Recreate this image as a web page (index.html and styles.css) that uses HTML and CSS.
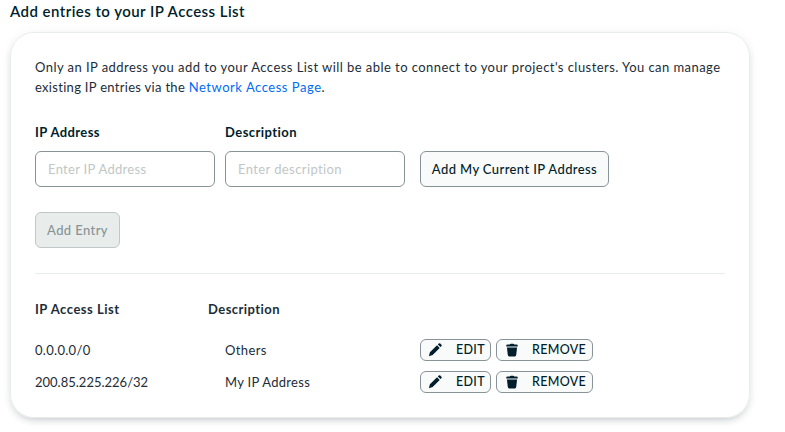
FILE: index.html
```
<!DOCTYPE html>
<html lang="en">
<head>
<meta charset="utf-8">
<title>IP Access List</title>
<link rel="stylesheet" href="styles.css">
</head>
<body>
<svg class="defs" aria-hidden="true">
  <symbol id="pencil" viewBox="0 0 16 16"><path d="M10.3 2.5 13.4 5.6 5.3 13.7 1 15 2.2 10.6ZM11.2 1.6 12.3.5Q13.2-.2 14 .6L15.4 2Q16 2.8 15.3 3.6L14.3 4.7Z"/></symbol>
  <symbol id="trash" viewBox="0 0 16 16"><path d="M5.5 1.8Q5.7.8 6.7.8H9.3Q10.3.8 10.5 1.8H13Q14.6 1.8 14.6 3V4H1.4V3Q1.4 1.8 3 1.8ZM2.2 5H13.8L12.8 13.8Q12.6 15.4 11.2 15.4H4.8Q3.4 15.4 3.2 13.8Z"/></symbol>
</svg>
<h1 class="title">Add entries to your IP Access List</h1>
<main class="card">
  <p class="intro"><span class="line first">Only an IP address you add to your Access List will be able to connect to your project's clusters. You can manage</span><br><span class="line second">existing IP entries via the <a class="link">Network Access Page</a>.</span></p>
  <form class="form">
    <label class="field"><span class="label">IP Address</span><input class="input ip" placeholder="Enter IP Address"></label>
    <label class="field"><span class="label desc">Description</span><input class="input" placeholder="Enter description"></label>
    <button type="button" class="button current">Add My Current IP Address</button>
  </form>
  <button type="button" class="button disabled" disabled>Add Entry</button>
  <hr class="rule">
  <div class="heads"><span class="list-label">IP Access List</span><span class="desc">Description</span></div>
  <div class="row">
    <span class="address zero">0.0.0.0/0</span><span class="note others">Others</span>
    <button class="small edit"><svg class="icon"><use href="#pencil"/></svg><span>EDIT</span></button>
    <button class="small remove"><svg class="icon"><use href="#trash"/></svg><span>REMOVE</span></button>
  </div>
  <div class="row">
    <span class="address">200.85.225.226/32</span><span class="note">My IP Address</span>
    <button class="small edit"><svg class="icon"><use href="#pencil"/></svg><span>EDIT</span></button>
    <button class="small remove"><svg class="icon"><use href="#trash"/></svg><span>REMOVE</span></button>
  </div>
</main>
</body>
</html>
```
FILE: styles.css
```
* { box-sizing: border-box; }
body { margin: 0; min-height: 432px; background: #fff; color: #1c2d38; font: 13px/20px Lato, "Liberation Sans", sans-serif; letter-spacing: .4px; }
button, input { font: inherit; letter-spacing: inherit; margin: 0; }
.defs { display: none; }
.title { margin: 0 0 0 10px; padding-top: 1px; height: 32px; color: #001e2b; font-size: 15px; font-weight: 600; line-height: 20px; letter-spacing: .45px; white-space: nowrap; }
.card { width: 740px; height: 386px; margin-left: 10px; padding: 24px 24px; border: 1px solid #e8edeb; border-radius: 24px; box-shadow: 0 4px 10px -4px rgba(0,30,43,.3), 0 0 12px rgba(0,30,43,.04); }
.intro { margin: 0; white-space: nowrap; }
.first { letter-spacing: .445px; }
.second { letter-spacing: .3px; }
.link { color: #016bf8; letter-spacing: .53px; }
.form { display: flex; align-items: flex-end; margin-top: 24px; }
.field { display: block; width: 180px; margin-right: 10px; }
.label { display: block; height: 30px; color: #001e2b; font-weight: 700; line-height: 22px; }
.desc { letter-spacing: .45px; }
.input { display: block; width: 180px; height: 36px; padding: 0 12px; border: 1px solid #889397; border-radius: 6px; background: #fff; }
.ip { letter-spacing: .3px; }
.input::placeholder { color: #c1c7c6; opacity: 1; }
.button { display: block; height: 36px; padding: 0; border: 1px solid #889397; border-radius: 6px; background: #f9fbfa; color: #001e2b; font-weight: 500; text-align: center; white-space: nowrap; }
.current { width: 189px; margin-left: 5px; letter-spacing: .39px; }
.disabled { width: 85px; margin-top: 25px; border-color: #c1c7c6; background: #e8edeb; color: #889397; }
.rule { height: 1px; margin: 25px 0 24px; border: 0; background: #e8edeb; }
.heads { display: grid; grid-template-columns: 173px 1fr; height: 36px; font-weight: 700; line-height: 22px; }
.list-label { letter-spacing: .5px; }
.row { display: grid; grid-template-columns: 190px 195px 71px 102px; height: 32px; align-items: center; }
.address { letter-spacing: 0; }
.zero { letter-spacing: .3px; }
.note { letter-spacing: .28px; }
.others { letter-spacing: .4px; }
.small { display: flex; align-items: center; height: 22px; padding: 0; border: 1px solid #889397; border-radius: 6px; background: #f9fbfa; color: #001e2b; font-size: 12.5px; font-weight: 500; line-height: 20px; letter-spacing: .3px; }
.edit { width: 71px; }
.remove { width: 97px; margin-left: 5px; }
.icon { flex: none; width: 14px; height: 14px; margin-left: 7px; fill: #001e2b; }
.remove .icon { margin-left: 8px; }
.small span { margin-left: 14px; }
.remove span { margin-left: 13px; }
```
